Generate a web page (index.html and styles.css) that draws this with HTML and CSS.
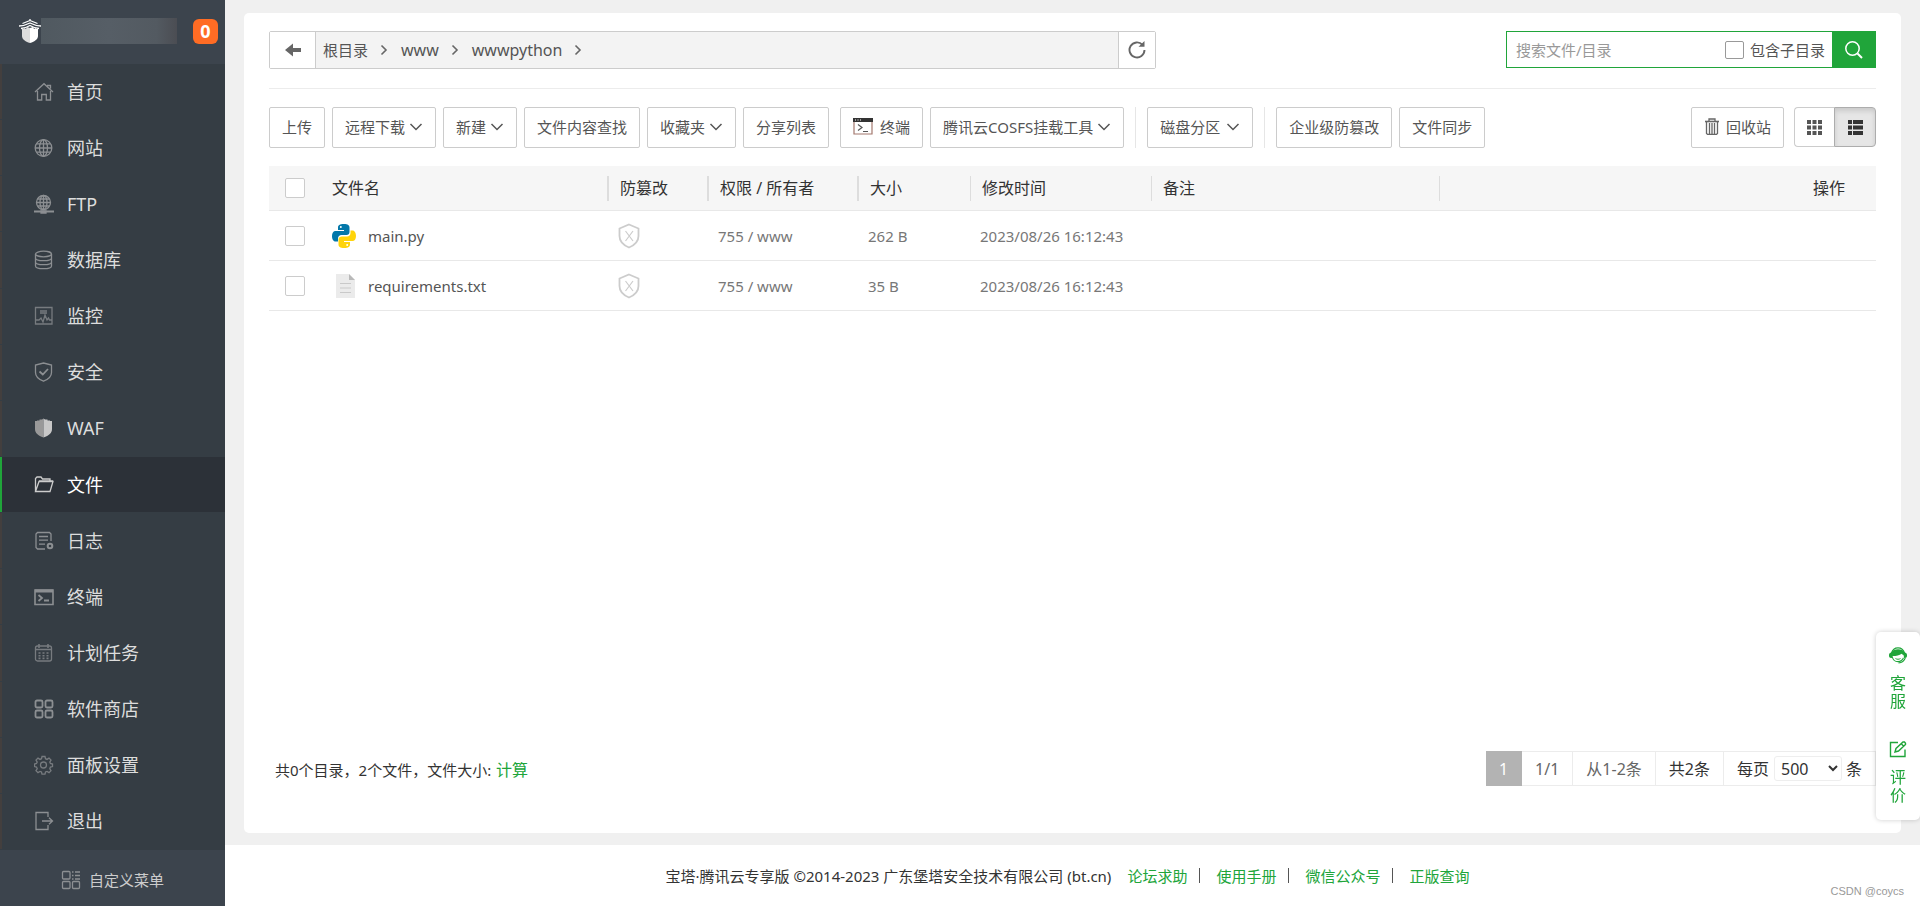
FILE: index.html
```html
<!DOCTYPE html>
<html lang="zh-CN">
<head>
<meta charset="utf-8">
<meta name="viewport" content="width=device-width, initial-scale=1">
<title>文件</title>
<link rel="stylesheet" href="styles.css">
</head>
<body>
<div class="app">
  <aside class="sidebar">
    <header class="brand">
      <svg class="brand-logo" viewBox="0 0 22 24" width="22" height="24" aria-hidden="true">
        <path d="M11 0v2M11 1.500L3.500 4.500M11 1.500l7.500 3M0 7c4.500 0 8-1.500 11-3 3 1.500 6.500 3 11 3M2 9.500c4-.5 6.500-1.500 9-3 2.500 1.500 5 2.500 9 3" fill="none" stroke="#fff" stroke-width="1.300"/>
        <path d="M3 10h2v-1l2 1 1-2 3 1v15c-5-1.500-8-4-8-7z" fill="#ddd"/>
        <path d="M19 10h-2v-1l-2 1-1-2-3 1v15c5-1.500 8-4 8-7z" fill="#fff"/>
      </svg>
      <span class="brand-host"></span>
      <span class="brand-badge">0</span>
    </header>
    <nav class="menu">
      <a class="menu-item" href="#"><svg class="icon" viewBox="0 0 20 20"><path d="M1 10l9-8.300L19 10M3.500 9v9h4.200v-5.500h4.600V18h4.200V9M13 3.500h3.500v3"/></svg>首页</a>
      <a class="menu-item" href="#"><svg class="icon" viewBox="0 0 20 20"><circle cx="9.500" cy="10" r="8.300"/><ellipse cx="9.500" cy="10" rx="4" ry="8.300"/><path d="M9.500 1.700v16.600M1.200 10h16.600M2.500 5.800h14M2.500 14.200h14"/></svg>网站</a>
      <a class="menu-item" href="#"><svg class="icon" viewBox="0 0 20 20"><circle cx="9.500" cy="8.500" r="7"/><ellipse cx="9.500" cy="8.500" rx="3.500" ry="7"/><path d="M9.500 1.500v14M2.500 8.500h14M3.500 5h12M3.500 12h12"/><path d="M0 17.500h20M7 17.500h5" stroke-width="2"/><path d="M7 17h5v2H7z" fill="currentColor"/></svg>FTP</a>
      <a class="menu-item" href="#"><svg class="icon" viewBox="0 0 20 20"><ellipse cx="9.500" cy="4" rx="8" ry="2.800"/><path d="M1.500 4v12c0 3.600 16 3.600 16 0V4M1.500 8c0 3.600 16 3.600 16 0M1.500 12c0 3.600 16 3.600 16 0"/></svg>数据库</a>
      <a class="menu-item" href="#"><svg class="icon icon-dim" viewBox="0 0 20 20"><path d="M1.500 1.500h16.500v16.500H1.500zM6 5h7M6 7h7M2 14h3l2-2 2 4 2-7 2 5 1.500-2 1 2H18"/></svg>监控</a>
      <a class="menu-item" href="#"><svg class="icon" viewBox="0 0 20 20"><path d="M9.500 1l8 2v7.500c0 4-3.500 7-8 8.700-4.500-1.700-8-4.700-8-8.700V3z"/><path d="M5.500 9.500l3.300 3 5.200-5.500" stroke-width="1.800"/></svg>安全</a>
      <a class="menu-item" href="#"><svg class="icon" viewBox="0 0 20 20"><path d="M9.500.5v19C4 17.500 1 15 1 11V3h2v-.5h2.500V1.500H8z" fill="#999" stroke="none"/><path d="M9.500.5v19c5.500-2 8.500-4.500 8.500-8.500V3h-2v-.5h-2.500V1.500H11z" fill="#c8c8c8" stroke="none"/></svg>WAF</a>
      <a class="menu-item is-active" href="#" aria-current="page"><svg class="icon" viewBox="0 0 20 20"><path d="M1.500 16.500v-13L3 2h4l1.500 2H16v2.500M1.500 16.500L5 6.500h14l-3 10zM5 6h14"/></svg>文件</a>
      <a class="menu-item" href="#"><svg class="icon" viewBox="0 0 20 20"><path d="M11 18H3.500l-1.500-1.500V3l1.500-1.500h12L17 3v7M5 5.500h9M5 9.200h9M5 13.200h6"/><circle cx="16" cy="15" r="2.300" stroke-width="2"/></svg>日志</a>
      <a class="menu-item" href="#"><svg class="icon" viewBox="0 0 20 20"><path d="M1 3h18v14.500H1z" stroke-width="1.600"/><path d="M1 4h18" stroke-width="3"/><path d="M4.500 8l3.500 3-3.500 3M10 13.500h5" stroke-width="1.800"/></svg>终端</a>
      <a class="menu-item" href="#"><svg class="icon icon-dim" viewBox="0 0 20 20"><rect x="1.500" y="3" width="16" height="15" rx="2"/><path d="M5 1v4M14 1v4M2 6.500h15" stroke-width="1.600"/><path d="M4.500 10h2M8.500 10h2M12.500 10h2M4.500 12.700h2M8.500 12.700h2M12.500 12.700h2M4.500 15.400h2M8.500 15.400h2M12.500 15.400h2" stroke-width="1.600"/></svg>计划任务</a>
      <a class="menu-item" href="#"><svg class="icon icon-bold" viewBox="0 0 20 20"><rect x="1.500" y="1.500" width="7" height="7" rx="1.500"/><rect x="11.500" y="1.500" width="7" height="7" rx="1.500"/><rect x="1.500" y="11.500" width="7" height="7" rx="1.500"/><rect x="11.500" y="11.500" width="7" height="7" rx="1.500"/></svg>软件商店</a>
      <a class="menu-item" href="#"><svg class="icon icon-dim" viewBox="0 0 20 20"><path d="M8 1.500h3l.5 2.200 1.500.7 2-1.300 2 2-1.200 2 .6 1.400 2.100.5v2.500l-2.100.6-.6 1.500 1.200 2-2 2-2-1.200-1.500.6-.5 2.200H8l-.5-2.200-1.500-.6-2 1.200-2-2 1.200-2-.7-1.500-2-.6V9l2-.5.700-1.400L2 5.100l2-2 2 1.300 1.500-.7z"/><circle cx="9.500" cy="10" r="3"/></svg>面板设置</a>
      <a class="menu-item" href="#"><svg class="icon" viewBox="0 0 20 20"><path d="M14 6V1.500H2v17h12V14M8 10h10M15 6.800l3.500 3.200-3.500 3.200"/></svg>退出</a>
    </nav>
    <a class="menu-custom" href="#"><svg class="icon" viewBox="0 0 20 20"><rect x="1.500" y="1.500" width="7.500" height="7.500" rx="1"/><rect x="1.500" y="11.500" width="7.500" height="7" rx="1"/><rect x="11.500" y="11.500" width="7" height="7" rx="1"/><path d="M11 2h1.500M14 2h5M11 5.500h1.500M14 5.500h5M11 9h1.500M14 9h5"/></svg>自定义菜单</a>
  </aside>

  <div class="page">
    <main class="card">
      <div class="topbar">
        <div class="path">
          <button class="path-btn path-back" type="button" aria-label="返回"><svg viewBox="0 0 16 14" width="16" height="14"><path d="M0 7l8-6.500V5h8v4H8v4.500z" fill="#666"/></svg></button>
          <div class="crumbs">
            <a href="#">根目录</a><svg class="crumb-sep" viewBox="0 0 8 12"><path d="M1.500 1.500L6 6l-4.500 4.500"/></svg>
            <a class="crumb-lg" href="#">www</a><svg class="crumb-sep" viewBox="0 0 8 12"><path d="M1.500 1.500L6 6l-4.500 4.500"/></svg>
            <a class="crumb-lg" href="#">wwwpython</a><svg class="crumb-sep" viewBox="0 0 8 12"><path d="M1.500 1.500L6 6l-4.500 4.500"/></svg>
          </div>
          <button class="path-btn path-refresh" type="button" aria-label="刷新"><svg viewBox="0 0 18 18" width="18" height="18"><path d="M14.500 3.800A7.500 7.500 0 1 0 16.500 9" fill="none" stroke="#666" stroke-width="1.900"/><path d="M16.500 0v5.800h-6z" fill="#666"/></svg></button>
        </div>
        <form class="search">
          <input class="search-input" type="text" placeholder="搜索文件/目录" aria-label="搜索文件/目录">
          <label class="search-sub"><input class="tick tick-sm" type="checkbox">包含子目录</label>
          <button class="search-btn" type="button" aria-label="搜索"><svg viewBox="0 0 18 18" width="18" height="18" fill="none" stroke="#fff"><circle cx="7.500" cy="7.500" r="6.700" stroke-width="1.500"/><path d="M12.500 12.500l4.500 4.500" stroke-width="2"/></svg></button>
        </form>
      </div>

      <div class="toolbar">
        <button class="btn" type="button">上传</button>
        <button class="btn" type="button">远程下载<svg class="caret" viewBox="0 0 14 8"><path d="M1.500 1L7 6.500 12.500 1"/></svg></button>
        <button class="btn" type="button">新建<svg class="caret" viewBox="0 0 14 8"><path d="M1.500 1L7 6.500 12.500 1"/></svg></button>
        <button class="btn" type="button">文件内容查找</button>
        <button class="btn" type="button">收藏夹<svg class="caret" viewBox="0 0 14 8"><path d="M1.500 1L7 6.500 12.500 1"/></svg></button>
        <button class="btn" type="button">分享列表</button>
        <button class="btn btn-term" type="button"><svg class="term" viewBox="0 0 20 17"><path d="M1 3v13h18V3" fill="none" stroke="#a3786e" stroke-width="1.200"/><path d="M0 0h20v4H0z" fill="#333"/><path d="M2 2h1M4.500 2h1M7 2h1" stroke="#fff" stroke-width="1.200"/><path d="M5 6.500l4 3-4 3M10 13.500h5" fill="none" stroke="#555" stroke-width="1.200"/></svg>终端</button>
        <button class="btn" type="button">腾讯云COSFS挂载工具<svg class="caret" viewBox="0 0 14 8"><path d="M1.500 1L7 6.500 12.500 1"/></svg></button>
        <span class="divider"></span>
        <button class="btn btn-disk" type="button">磁盘分区<svg class="caret" viewBox="0 0 14 8"><path d="M1.500 1L7 6.500 12.500 1"/></svg></button>
        <span class="divider"></span>
        <button class="btn" type="button">企业级防篡改</button>
        <button class="btn" type="button">文件同步</button>
        <div class="toolbar-end">
          <button class="btn" type="button"><svg class="trash" viewBox="0 0 16 17" fill="none" stroke="#666"><path d="M1 3.500h14" stroke-width="1.600"/><path d="M5 3V1h6v2M2.500 4v11.500l1 .8h9l1-.8V4M5.500 5v11M8 5v11M10.500 5v11" stroke-width="1.300"/></svg>回收站</button>
          <div class="views">
            <button class="view" type="button" aria-label="图标"><svg viewBox="0 0 15 15" width="15" height="15" fill="#555"><path d="M0 0h4v4H0zM5.500 0h4v4h-4zM11 0h4v4h-4zM0 5.500h4v4H0zM5.500 5.500h4v4h-4zM11 5.500h4v4h-4zM0 11h4v4H0zM5.500 11h4v4h-4zM11 11h4v4h-4z"/></svg></button>
            <button class="view is-on" type="button" aria-label="列表" aria-pressed="true"><svg viewBox="0 0 15 15" width="15" height="15" fill="#333"><path d="M0 0h4v4H0zM5 0h10v4H5zM0 5.500h4v4H0zM5 5.500h10v4H5zM0 11h4v4H0zM5 11h10v4H5z"/></svg></button>
          </div>
        </div>
      </div>

      <table class="files">
        <colgroup><col class="c-check"><col class="c-name"><col class="c-lock"><col class="c-perm"><col class="c-size"><col class="c-time"><col class="c-note"><col></colgroup>
        <thead>
          <tr>
            <th class="cell-check"><input class="tick" type="checkbox" aria-label="全选"></th>
            <th class="sep sep-wide cell-name">文件名</th><th class="sep sep-wide">防篡改</th><th class="sep sep-wide">权限 / 所有者</th><th class="sep">大小</th><th class="sep">修改时间</th><th class="sep">备注</th><th class="cell-ops">操作</th>
          </tr>
        </thead>
        <tbody>
          <tr>
            <td class="cell-check"><input class="tick" type="checkbox" aria-label="main.py"></td>
            <td class="cell-name"><a class="file" href="#"><svg class="file-icon" viewBox="0 0 24 24"><path d="M11.900 0C7.500 0 6 1.500 6 3.500V6h6v1H3.500C1.300 7 0 9 0 12s1.300 5.500 3.500 5.500H6v-3c0-2 1.500-3.500 3.500-3.500h5c1.800 0 3-1.300 3-3V3.500C17.500 1.500 16 0 11.900 0z" fill="#0277a9"/><circle cx="8.800" cy="3" r="1" fill="#fff"/><path d="M12.100 24c4.400 0 5.900-1.500 5.900-3.500V18h-6v-1h8.500c2.200 0 3.500-2 3.500-5s-1.300-5.500-3.500-5.500H18.500v2.500c0 2-1.500 3.500-3.500 3.500H10c-2 0-3.500 1.300-3.500 3v5c0 2 1.500 3.500 5.600 3.500z" fill="#ffd40a"/><circle cx="15.200" cy="21" r="1" fill="#fff"/></svg>main.py</a></td>
            <td><svg class="shield" viewBox="0 0 22 26"><path d="M11 1.500l9.500 4V13c0 5-3.500 9-9.500 11.500C5 22 1.500 18 1.500 13V5.500z" stroke-width="1.800"/><path d="M7.500 8l7.500 10M15 8L7.500 18"/></svg></td>
            <td>755 / www</td><td>262 B</td><td>2023/08/26 16:12:43</td><td></td><td></td>
          </tr>
          <tr>
            <td class="cell-check"><input class="tick" type="checkbox" aria-label="requirements.txt"></td>
            <td class="cell-name"><a class="file" href="#"><svg class="file-icon" viewBox="0 0 24 24"><path d="M4 0h13l6 6v18H4z" fill="#ebebeb"/><path d="M17 0v6h6z" fill="#b9b9b9"/><path d="M8 9.500h11M8 14h11M8 18.500h11" stroke="#c9c9c9"/></svg>requirements.txt</a></td>
            <td><svg class="shield" viewBox="0 0 22 26"><path d="M11 1.500l9.500 4V13c0 5-3.500 9-9.500 11.500C5 22 1.500 18 1.500 13V5.500z" stroke-width="1.800"/><path d="M7.500 8l7.500 10M15 8L7.500 18"/></svg></td>
            <td>755 / www</td><td>35 B</td><td>2023/08/26 16:12:43</td><td></td><td></td>
          </tr>
        </tbody>
      </table>

      <div class="summary">
        <p class="totals">共0个目录，2个文件，文件大小: <a href="#">计算</a></p>
        <div class="pager">
          <span class="pager-cell is-current">1</span>
          <span class="pager-cell">1/1</span>
          <span class="pager-cell">从1-2条</span>
          <span class="pager-cell dark">共2条</span>
          <label class="pager-cell dark">每页<select class="pager-size"><option>500</option></select>条</label>
        </div>
      </div>
    </main>

    <footer class="footer">
      <span class="copyright">宝塔·腾讯云专享版 ©2014-2023 广东堡塔安全技术有限公司 (bt.cn)</span>
      <a href="#">论坛求助</a><i class="bar"></i><a href="#">使用手册</a><i class="bar"></i><a href="#">微信公众号</a><i class="bar"></i><a href="#">正版查询</a>
      <span class="credit">CSDN @coycs</span>
    </footer>
  </div>

  <div class="dock">
    <a class="dock-item" href="#"><svg viewBox="0 0 18 17" width="18" height="17" fill="none" stroke="#20a53a"><path d="M2.500 6C3.500 2.500 6 .8 9 .8s5.500 1.700 6.500 5.200" stroke-width="1.200"/><path d="M0 8c0-1.500 1-2.500 2.300-2.500C3.800 3.300 6 2.300 9 2.300s5.200 1 6.700 3.200C17 5.500 18 6.500 18 8v1c0 1.300-1 2-2 2h-.8L14.500 8c-.8-.2-1.400-.6-1.800-1.300C10.500 8.500 7 9 4 9l-1.200 2H2c-1 0-2-.7-2-2z" fill="#20a53a" stroke="none"/><path d="M3.300 10c.7 3 3 4.600 5.700 4.600 2.500 0 4.500-1.300 5.500-3.800M16.300 11c-1 2.800-3.300 4.600-6.800 5" stroke-width="1.100"/><path d="M6.500 11.500c1.500 1 3.500 1 5 0" stroke-width="1"/></svg><span>客服</span></a>
    <a class="dock-item" href="#"><svg viewBox="0 0 18 17" width="18" height="17" fill="none" stroke="#20a53a" stroke-width="1.400"><path d="M9 1.500H1.500v14H16V8.500M6 11l1-3.500 7-6.500h1.500l1 1.200V3.500L9.500 10zM12.500 3l2 2"/></svg><span>评价</span></a>
  </div>
</div>
</body>
</html>
```
FILE: styles.css
```css
* { box-sizing: border-box; }

body {
  margin: 0;
  background: #f0f0f0;
  color: #333;
  font: 15px/20px "Noto Sans", "Noto Sans CJK SC", sans-serif;
}

a { color: #20a53a; text-decoration: none; }
button, input, select { font: inherit; color: inherit; }
button { cursor: pointer; }

.app { display: flex; min-height: 100vh; }

/* Sidebar */
.sidebar {
  display: flex;
  flex-direction: column;
  flex: 0 0 225px;
  background: #353d44;
}
.brand {
  display: flex;
  align-items: center;
  height: 64px;
  padding: 0 7px 2px 19px;
  background: #3c444d;
}
.brand-host {
  width: 136px;
  height: 26px;
  background: linear-gradient(90deg, #505960, #565e66 50%, #535a61 85%, #4b4d53);
}
.brand-badge {
  width: 25px;
  height: 25px;
  margin-left: auto;
  border-radius: 6px;
  background: #ff6c24;
  color: #fff;
  font-size: 18px;
  font-weight: 700;
  line-height: 24px;
  text-align: center;
}
.menu { display: flex; flex: 1; flex-direction: column; }
.menu-item {
  display: flex;
  flex: 1;
  align-items: center;
  gap: 13px;
  min-height: 40px;
  margin-bottom: 1px;
  padding-left: 32px;
  border-left: 2px solid #433f3e;
  color: #ddd;
  font-size: 18px;
  line-height: 24px;
}
.menu-item.is-active {
  border-left-color: #20a53a;
  background: #2c3138;
  color: #fff;
}
.icon {
  width: 20px;
  height: 20px;
  flex: none;
  fill: none;
  stroke: currentColor;
  stroke-width: 1.3;
  color: #8c8f92;
}
.icon-dim { color: #777b7f; }
.icon-bold { stroke-width: 1.8; }
.is-active .icon { color: #ccc; }
.menu-custom {
  display: flex;
  align-items: center;
  justify-content: center;
  gap: 8px;
  height: 56px;
  padding-top: 4px;
  background: #3c444d;
  color: #ccc;
}

/* Page */
.page { display: flex; flex: 1; flex-direction: column; min-width: 0; }
.card {
  display: flex;
  flex: 1;
  flex-direction: column;
  margin: 13px 19px 12px;
  padding: 18px 25px 47px;
  border-radius: 5px;
  background: #fff;
}
.topbar {
  display: flex;
  justify-content: space-between;
  padding-bottom: 19px;
  border-bottom: 1px solid #ececec;
}
.path {
  display: flex;
  flex: 0 1 887px;
  height: 38px;
  border: 1px solid #ccc;
  border-radius: 2px;
}
.path-btn {
  display: grid;
  place-items: center;
  padding: 0;
  border: 0;
  background: #fff;
}
.path-back { width: 46px; border-right: 1px solid #ccc; }
.path-refresh { width: 37px; border-left: 1px solid #ccc; }
.crumbs {
  display: flex;
  flex: 1;
  align-items: center;
  padding-left: 7px;
  background: #f3f3f3;
}
.crumbs a { color: #555; }
.crumbs .crumb-lg { font-size: 16px; }
.crumb-sep {
  width: 8px;
  height: 12px;
  margin: 0 13px 0 12px;
  fill: none;
  stroke: #666;
  stroke-width: 1.6;
}
.search {
  display: flex;
  align-items: center;
  width: 370px;
  height: 37px;
  border: 1px solid #20a53a;
}
.search-input {
  flex: 1;
  min-width: 0;
  padding: 0 9px;
  border: 0;
  outline: 0;
  background: none;
}
.search-input::placeholder { color: #999; }
.search-sub {
  display: flex;
  align-items: center;
  gap: 6px;
  padding-right: 7px;
  color: #555;
}
.search-btn {
  display: grid;
  place-items: center;
  width: 43px;
  height: 100%;
  padding: 0;
  border: 0;
  background: #20a53a;
}

.tick {
  display: block;
  width: 20px;
  height: 20px;
  margin: 0;
  border: 1px solid #ccc;
  border-radius: 2px;
  background: #fff;
  appearance: none;
}
.tick-sm { width: 19px; height: 18px; border-color: #999; }

/* Toolbar */
.toolbar { display: flex; gap: 7px; padding: 18px 0; }
.btn {
  display: flex;
  align-items: center;
  height: 41px;
  padding: 0 12px 2px;
  border: 1px solid #ccc;
  border-radius: 2px;
  background: #fff;
  color: #555;
  white-space: nowrap;
}
.btn-term { margin-left: 4px; }
.caret {
  width: 14px;
  height: 8px;
  margin-left: 4px;
  fill: none;
  stroke: #555;
  stroke-width: 1.5;
}
.btn-disk .caret { margin-left: 6px; }
.term { width: 20px; height: 17px; margin-right: 7px; }
.trash { width: 16px; height: 17px; margin-right: 6px; }
.divider { width: 1px; margin: 0 4px; background: #e6e6e6; }
.toolbar-end { display: flex; gap: 10px; margin-left: auto; }
.views { display: flex; height: 40px; }
.view {
  display: grid;
  place-items: center;
  width: 40px;
  padding: 0;
  border: 1px solid #ccc;
  border-right: 0;
  border-radius: 4px 0 0 4px;
  background: #fff;
}
.view.is-on {
  width: 42px;
  border: 1px solid #adadad;
  border-radius: 0 4px 4px 0;
  background: #e6e6e6;
  box-shadow: inset 0 3px 5px rgba(0, 0, 0, 0.125);
}

/* File table */
.files {
  width: 100%;
  border-spacing: 0;
  table-layout: fixed;
  color: #777;
}
.c-check { width: 53px; }
.c-name { width: 287px; }
.c-lock { width: 100px; }
.c-perm { width: 150px; }
.c-size { width: 112px; }
.c-time { width: 181px; }
.c-note { width: 288px; }
.files th {
  height: 45px;
  padding: 0 11px;
  border-bottom: 1px solid #e8e8e8;
  background: #f6f6f6;
  color: #333;
  font-size: 16px;
  font-weight: 400;
  text-align: left;
}
.files th.sep {
  background: linear-gradient(#ddd, #ddd) right center / 1px 25px no-repeat #f6f6f6;
}
.files th.sep-wide { background-size: 2px 25px; }
.files td {
  height: 50px;
  padding: 0 9px;
  border-bottom: 1px solid #e8e8e8;
}
.files .cell-check { padding: 0 16px; }
.files .cell-name { padding: 0 10px; }
.files .cell-ops { padding-right: 31px; text-align: right; }
.files .file { display: flex; align-items: center; gap: 12px; color: #555; }
.file-icon { width: 24px; height: 24px; }
.shield {
  display: block;
  width: 22px;
  height: 26px;
  fill: none;
  stroke: #ccc;
  stroke-width: 1.2;
}

/* Totals and pager */
.summary {
  display: flex;
  align-items: center;
  justify-content: space-between;
  margin-top: auto;
}
.totals { margin: 0; padding: 2px 0 0 6px; }
.totals a { margin-left: 1px; font-size: 16px; }
.pager { display: flex; height: 35px; font-size: 16px; }
.pager-cell {
  display: flex;
  align-items: center;
  padding: 0 13px;
  border: 1px solid #ececec;
  border-left: 0;
  color: #666;
}
.pager-cell.dark { color: #333; }
.pager-cell.is-current { border-color: #b3b3b3; background: #b3b3b3; color: #fff; }
.pager-size {
  width: 68px;
  height: 25px;
  margin: 0 4px 0 5px;
  padding: 0 2px;
  border: 1px solid #eee;
  border-radius: 3px;
  background: #fff;
}

/* Footer */
.footer {
  display: flex;
  position: relative;
  align-items: center;
  justify-content: center;
  height: 61px;
  padding-right: 10px;
  background: #fff;
}
.copyright { margin-right: 16px; }
.bar { width: 1px; height: 15px; margin: 0 16px 0 12px; background: #555; }
.credit {
  position: absolute;
  right: 16px;
  bottom: 5px;
  color: #999;
  font-family: "Liberation Sans", sans-serif;
  font-size: 11px;
}

/* Floating service dock */
.dock {
  display: flex;
  position: fixed;
  right: 0;
  bottom: 86px;
  flex-direction: column;
  gap: 31px;
  width: 44px;
  padding: 15px 0 16px;
  border-radius: 5px;
  background: #fff;
  box-shadow: 0 0 5px rgba(0, 0, 0, 0.2);
}
.dock-item {
  display: flex;
  flex-direction: column;
  align-items: center;
  gap: 10px;
  font-size: 16px;
  line-height: 18px;
}
.dock-item span { width: 16px; }
```
